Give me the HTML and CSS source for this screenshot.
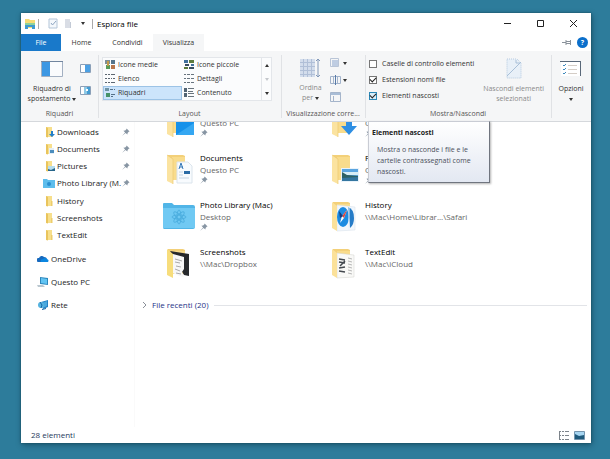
FILE: index.html
```
<!DOCTYPE html>
<html lang="it">
<head>
    <meta charset="UTF-8">
    <meta name="viewport" content="width=device-width, initial-scale=1.0">
    <title>Esplora file</title>
    <link rel="stylesheet" href="styles.css">
</head>
<body>
    <!-- Shared icons -->
    <svg class="defs" aria-hidden="true">
        <symbol id="pin" viewBox="0 0 8 8">
            <path d="M4.6 0.4L7.6 3.4L6.7 3.7L5.6 4.9L5.4 6.6L3.5 4.9L0.6 7.6L0.4 7.4L3.1 4.5L1.4 2.7L3.2 2.4L4.4 1.3Z" fill="#8795a3"/>
        </symbol>
        <symbol id="folder-small" viewBox="0 0 12 12">
            <path d="M3 1h6v10H3z" fill="#f7df8c"/>
            <path d="M3 1l2 1v9.500l-2-.5z" fill="#e9c45c"/>
            <path d="M8 6h1.500v5H8z" fill="#edcd6c"/>
        </symbol>
        <symbol id="folder-back" viewBox="0 0 34 33">
            <path d="M6 3h15l2 1v24H6z" fill="#f3d079"/>
            <path d="M10 5h13v23H10z" fill="#f9dc8c"/>
        </symbol>
        <symbol id="folder-front" viewBox="0 0 34 33">
            <path d="M5 3l6 4v25l-6-3z" fill="#fbe3a0"/>
            <path d="M5 3l6 4v25" fill="none" stroke="#ecc870" stroke-width=".7"/>
        </symbol>
    </svg>

    <div class="window">
        <header class="titlebar">
            <svg class="app-icon" width="12" height="10" viewBox="0 0 12 10">
                <path d="M1 0h4l1 1h5v8H1z" fill="#f5dc75"/>
                <path d="M1 4h10v2H1z" fill="#8fd39a"/>
                <path d="M1 6h10v4H8V8H4v2H1z" fill="#3f9bd0"/>
            </svg>
            <span class="bar"></span>
            <button class="quick" aria-label="Proprietà">
                <svg width="10" height="11" viewBox="0 0 10 11"><path d="M1 1h8v9H1z" fill="#f4f8fc" stroke="#b3c5d8"/><path d="M3 5l1.500 2L8 3" fill="none" stroke="#8fa6c2"/></svg>
            </button>
            <button class="quick" aria-label="Nuova cartella">
                <svg width="10" height="11" viewBox="0 0 10 11"><path d="M2 1h5v9H2z" fill="#d9dde5"/><path d="M7 4h1v6H7z" fill="#c3cad6"/></svg>
            </button>
            <button class="quick" aria-label="Personalizza"><span class="caret"></span></button>
            <span class="bar"></span>
            <h1>Esplora file</h1>
            <div class="controls">
                <button aria-label="Riduci"><svg width="9" height="9"><path d="M1 4.500h7" stroke="#222"/></svg></button>
                <button aria-label="Ingrandisci"><svg width="9" height="9"><path d="M1.500 1.500h6v6h-6z" fill="none" stroke="#222"/></svg></button>
                <button aria-label="Chiudi"><svg width="9" height="9"><path d="M1 1l7 7M8 1l-7 7" stroke="#222"/></svg></button>
            </div>
        </header>

        <nav class="tabs">
            <a class="file" href="#file">File</a>
            <a class="home" href="#home">Home</a>
            <a class="share" href="#condividi">Condividi</a>
            <a class="active" href="#visualizza">Visualizza</a>
            <div class="tab-tools">
                <button aria-label="Blocca barra"><svg width="10" height="7" viewBox="0 0 10 7"><path d="M0 3.500h4M4 1v5M4 2.500h4M4 4.500h4M8.500 1v5" fill="none" stroke="#8a929b"/></svg></button>
                <button class="help" aria-label="Guida">?</button>
            </div>
        </nav>

        <section class="ribbon">
            <div class="group panes">
                <div class="tools">
                    <button class="big">
                        <svg width="22" height="16" viewBox="0 0 22 16"><path d="M.5.5h21v15H.5z" fill="#fafbfd" stroke="#a3b0c2"/><path d="M1 1h8v14H1z" fill="#3c97e3"/><path d="M0 .5h22" stroke="#71859f"/></svg>
                        <span>Riquadro di<br>spostamento <i class="caret"></i></span>
                    </button>
                    <div class="small-tools">
                        <button aria-label="Riquadro di anteprima"><svg width="11" height="9" viewBox="0 0 11 9"><path d="M.5.5h10v8H.5z" fill="#fff" stroke="#8ba0b8"/><path d="M5 1h5v7H5z" fill="#4ca1e4"/></svg></button>
                        <button aria-label="Riquadro dettagli"><svg width="11" height="9" viewBox="0 0 11 9"><path d="M.5.5h10v8H.5z" fill="#fff" stroke="#8ba0b8"/><path d="M4 1h3v7H4z" fill="#8ec9e6"/><path d="M7 1h3v7H7z" fill="#459cd2"/><path d="M6 3h2v2H6z" fill="#fff"/></svg></button>
                    </div>
                </div>
                <h2>Riquadri</h2>
            </div>

            <div class="group layout">
                <div class="gallery">
                    <div class="options">
                        <button><svg width="11" height="10" viewBox="0 0 11 10"><path d="M0 0h5v4H0z" fill="#7d8f98"/><path d="M6 0h4v4H6z" fill="#54748c"/><path d="M1 5h4v4H1z" fill="#589b58"/><path d="M6 5h4v4H6z" fill="#b8764c"/><path d="M2 1h2v5H2z" fill="#c49b4a"/></svg>Icone medie</button>
                        <button><svg width="11" height="10" viewBox="0 0 11 10"><path d="M0 0h4v3H0zM7 4h3v2H7z" fill="#3f6f9c"/><path d="M5 0h5v3H5zM0 7h4v2H0z" fill="#5d7b3e"/><path d="M1 4h4v2H1zM5 7h5v2H5z" fill="#384c60"/></svg>Icone piccole</button>
                        <button><svg width="11" height="10" viewBox="0 0 11 10"><path d="M0 .5h2M3 .5h2M6 .5h4M0 4.500h2M3 4.500h2M6 4.500h1M8 4.500h2M0 8.500h2M3 8.500h2M6 8.500h4" stroke="#5d6771"/></svg>Elenco</button>
                        <button><svg width="11" height="10" viewBox="0 0 11 10"><path d="M0 .5h2M3 .5h3M7 .5h3M0 4.500h2M3 4.500h3M7 4.500h3M0 8.500h2M3 8.500h3M7 8.500h3" stroke="#68747e"/></svg>Dettagli</button>
                        <button class="selected"><svg width="11" height="10" viewBox="0 0 11 10"><path d="M0 0h4v3H0z" fill="#6f94a5"/><path d="M1 5h4v4H1z" fill="#479268"/><path d="M5 1.500h3M9 1.500h1M6 6.500h4M6 8.500h2" stroke="#547088"/></svg>Riquadri</button>
                        <button><svg width="11" height="10" viewBox="0 0 11 10"><path d="M0 0h3v4H0zM0 5h3v4H0z" fill="#526473"/><path d="M4 .5h6M4 3.500h5M4 5.500h6M4 8.500h6" stroke="#69747d"/></svg>Contenuto</button>
                    </div>
                    <div class="scroller">
                        <button aria-label="Su"><span class="caret up"></span></button>
                        <button aria-label="Giù"><span class="caret faint"></span></button>
                        <button aria-label="Altro"><span class="caret"></span></button>
                    </div>
                </div>
                <h2>Layout</h2>
            </div>

            <div class="group current">
                <div class="tools">
                    <button class="big" disabled>
                        <svg width="20" height="20" viewBox="0 0 20 20"><path d="M0 1h15v18H0z" fill="#d3ddec"/><path d="M0 4.500h15M0 8.500h15M0 12.500h15M0 16.500h15M3.500 1v18M7.500 1v18M11.500 1v18" stroke="#b0bfd7"/><path d="M18 1v18M16 3l2-2 2 2M16 17l2 2 2-2" fill="none" stroke="#8298b8"/></svg>
                        <span>Ordina<br>per <i class="caret"></i></span>
                    </button>
                    <div class="small-tools">
                        <button aria-label="Raggruppa per"><svg width="11" height="10" viewBox="0 0 11 10"><path d="M2 2h6v6H2z" fill="#bfcde2"/><path d="M.5.5h8v8h-8z" fill="none" stroke="#b9c5d7"/></svg><i class="caret"></i></button>
                        <button aria-label="Aggiungi colonne"><svg width="11" height="10" viewBox="0 0 11 10"><path d="M.5 1.500h10v7H.5zM3.500 2v7M7.500 2v7" fill="none" stroke="#a3b4cc"/><path d="M5.500 0v10" stroke="#587ba8"/></svg><i class="caret"></i></button>
                        <button aria-label="Ridimensiona colonne"><svg width="11" height="10" viewBox="0 0 11 10"><path d="M.5.5h10v9H.5zM3.500 4v6" fill="none" stroke="#a5b5cb"/><path d="M1 1h9v2H1z" fill="#a9bdd6"/></svg></button>
                    </div>
                </div>
                <h2>Visualizzazione corre...</h2>
            </div>

            <div class="group show">
                <div class="tools">
                    <div class="checks">
                        <label><input type="checkbox"> Caselle di controllo elementi</label>
                        <label><input type="checkbox" checked> Estensioni nomi file</label>
                        <label><input class="hot" type="checkbox" aria-describedby="tip" checked> Elementi nascosti</label>
                    </div>
                    <button class="big" disabled>
                        <svg width="16" height="21" viewBox="0 0 16 21"><path d="M1 1h10l4 4v15H1z" fill="#e8f0f8"/><path d="M1 1h10l4 4v15H1z" fill="none" stroke="#b6cae0" stroke-dasharray="1 1"/><path d="M1 18L15 4M10 2v3h4" fill="none" stroke="#a9c0d8"/></svg>
                        <span>Nascondi elementi<br>selezionati</span>
                    </button>
                </div>
                <h2>Mostra/Nascondi</h2>
                <div class="tooltip" id="tip" role="tooltip">
                    <strong>Elementi nascosti</strong>
                    <p>Mostra o nasconde i file e le cartelle contrassegnati come nascosti.</p>
                </div>
            </div>

            <div class="group settings">
                <button class="big">
                    <svg width="22" height="16" viewBox="0 0 22 16"><path d="M1 1h19v14H1z" fill="#fff"/><path d="M0 .5h21M20.500 1v14" stroke="#596879"/><path d="M3 4l1 1 2-2M3 8l1 1 2-2M3 12l1 1 2-2" fill="none" stroke="#3d89bd"/><path d="M8 4.500h9M8 8.500h9M8 12.500h9" stroke="#d4cdc6"/></svg>
                    <span>Opzioni<br><i class="caret"></i></span>
                </button>
            </div>
        </section>

        <main>
            <aside class="sidebar">
                <ul class="folders">
                    <li><a href="#downloads"><svg class="ico" viewBox="0 0 12 12"><use href="#folder-small"/><path d="M8 5h2v3h2L9 11 6 8h2z" fill="#237fc9"/></svg>Downloads</a><svg class="pin"><use href="#pin"/></svg></li>
                    <li><a href="#documents"><svg class="ico" viewBox="0 0 12 12"><use href="#folder-small"/><path d="M6 5h5v6H6z" fill="#e4eef6"/><path d="M7 7h4v3H7z" fill="#4b8dbd"/></svg>Documents</a><svg class="pin"><use href="#pin"/></svg></li>
                    <li><a href="#pictures"><svg class="ico" viewBox="0 0 12 12"><use href="#folder-small"/><path d="M5 6h7v5H5z" fill="#b5dced"/><path d="M5 9l3 1 4-2v3H5z" fill="#27658a"/></svg>Pictures</a><svg class="pin"><use href="#pin"/></svg></li>
                    <li><a href="#photos"><svg class="ico" viewBox="0 0 12 12"><path d="M0 2h4l1 1h7v8H0z" fill="#5dbdec"/><circle cx="6" cy="7" r="2" fill="#2a8fd0"/></svg>Photo Library (M.</a><svg class="pin"><use href="#pin"/></svg></li>
                    <li><a href="#history"><svg class="ico"><use href="#folder-small"/></svg>History</a></li>
                    <li><a href="#screenshots"><svg class="ico"><use href="#folder-small"/></svg>Screenshots</a></li>
                    <li><a href="#textedit"><svg class="ico"><use href="#folder-small"/></svg>TextEdit</a></li>
                </ul>
                <ul class="places">
                    <li><a href="#onedrive"><svg class="ico" viewBox="0 0 12 12"><path d="M1 9a2 2 0 0 1 1-4 3 3 0 0 1 5-1 3 3 0 0 1 3 3v2z" fill="#1769be"/><path d="M4 9a2 2 0 0 1 2-3 3 3 0 0 1 4 0 2 2 0 0 1 1 3z" fill="#0b86e0"/></svg>OneDrive</a></li>
                    <li><a href="#pc"><svg class="ico" viewBox="0 0 12 12"><path d="M3 1l8 1v7l-8-1z" fill="#2c87bd"/><path d="M4 2l6 1v5l-6-1z" fill="#61c4f3"/><path d="M0 9h6l2 2H1z" fill="#bac7cf"/></svg>Questo PC</a></li>
                    <li><a href="#rete"><svg class="ico" viewBox="0 0 12 12"><path d="M4 3l7-2v7l-5 2z" fill="#2281c4"/><path d="M5 4l5-2v5l-4 2z" fill="#4aa8de"/><circle cx="4" cy="6" r="3" fill="#55b3e0"/><path d="M3 3l2 3-1 3M5 10.500l4-1" fill="none" stroke="#1766a4"/></svg>Rete</a></li>
                </ul>
            </aside>

            <div class="content">
                <div class="tiles">
                    <a class="tile" href="#desktop">
                        <svg width="34" height="33"><use href="#folder-back"/><path d="M14 13h18v17H14z" fill="#1691ea"/><path d="M14 30l18-12v12z" fill="#35a7f2"/><use href="#folder-front"/></svg>
                        <span><b>Desktop</b><small>Questo PC</small><svg class="pin"><use href="#pin"/></svg></span>
                    </a>
                    <a class="tile" href="#downloads">
                        <svg width="34" height="33"><use href="#folder-back"/><use href="#folder-front"/><path d="M19 11h6v10h5l-8 9-8-9h5z" fill="#2f8fe3"/></svg>
                        <span><b>Downloads</b><small>Questo PC</small><svg class="pin"><use href="#pin"/></svg></span>
                    </a>
                    <a class="tile" href="#documents">
                        <svg width="34" height="33"><use href="#folder-back"/><path d="M15 10h11l4 4v17H15z" fill="#f8fbfe" stroke="#dbe4ec"/><path d="M17 17l2-6 2 6M18 15h3" fill="none" stroke="#3478b8"/><path d="M22 19h6v3h-6z" fill="#2b6ba5"/><path d="M17 20h4M17 23h4M17 26h10" stroke="#c6d5e3"/><use href="#folder-front"/></svg>
                        <span><b>Documents</b><small>Questo PC</small><svg class="pin"><use href="#pin"/></svg></span>
                    </a>
                    <a class="tile" href="#pictures">
                        <svg width="34" height="33"><use href="#folder-back"/><use href="#folder-front"/><path d="M14 16h18v14H14z" fill="#e9f3fb"/><path d="M15 17h16v12H15z" fill="#5aa5e0"/><path d="M15 20h16v3H15z" fill="#d7edf5"/><path d="M15 20l5 3 11 1v5H15z" fill="#2e6264"/><path d="M15 26l16-1v4H15z" fill="#3476a0"/></svg>
                        <span><b>Pictures</b><small>Questo PC</small><svg class="pin"><use href="#pin"/></svg></span>
                    </a>
                    <a class="tile" href="#photos">
                        <svg width="34" height="33"><path d="M1 5q0-1 1-1h8l2 2h19q2 0 2 2v20q0 2-2 2H2q-1 0-1-2z" fill="#51b5e7"/><path d="M1 9h32v20H1z" fill="#70c9f3"/><g fill="none" stroke="#4dafe0"><ellipse cx="17" cy="18" rx="2" ry="7"/><ellipse cx="17" cy="18" rx="7" ry="2"/><ellipse cx="17" cy="18" rx="2" ry="7" transform="rotate(45 17 18)"/><ellipse cx="17" cy="18" rx="2" ry="7" transform="rotate(-45 17 18)"/></g></svg>
                        <span><b>Photo Library (Mac)</b><small>Desktop</small><svg class="pin"><use href="#pin"/></svg></span>
                    </a>
                    <a class="tile" href="#history">
                        <svg width="34" height="33"><use href="#folder-back"/><path d="M10 6l18 2v23l-18 1z" fill="#f2f7fc" stroke="#d5dfe9" stroke-width=".5"/><ellipse cx="16" cy="18" rx="6" ry="10" fill="#1c8be1"/><path d="M21 8q6 2 6 11 0 7-4 10z" fill="#267cc7"/><path d="M13 24l2-7 5-6-3 8z" fill="#fff"/><path d="M15 17l5-6-3 8z" fill="#d9473f"/><path d="M12 12l4 5-3 2z" fill="#143c82"/><path d="M22 7v24" stroke="#e9f2fa"/><path d="M5 3l5 4v25l-5-3z" fill="#fbe19a"/></svg>
                        <span><b>History</b><small>\\Mac\Home\Librar...\Safari</small></span>
                    </a>
                    <a class="tile" href="#screenshots">
                        <svg width="34" height="33"><use href="#folder-back"/><path d="M8 5l19 3v22l-5-1z" fill="#27292c"/><path d="M11 8l11 3v12l-2 3 2 5-5-1-6-3z" fill="#f7f7f7"/><path d="M13 13l7 2M13 16l5 1M14 20l5 1M13 23l5 2M14 27l5 1" stroke="#888" stroke-width=".7"/><path d="M5 3l6 5v24l-6-3z" fill="#f7dd7c"/></svg>
                        <span><b>Screenshots</b><small>\\Mac\Dropbox</small></span>
                    </a>
                    <a class="tile" href="#textedit">
                        <svg width="34" height="33"><use href="#folder-back"/><path d="M10 7l17 2v22l-17 1z" fill="#f9f9f7" stroke="#d2d2cc" stroke-width=".5"/><path d="M12 13l6 1M12 16l6 1M13 20l5-5M12 22l6-1M12 25l6 1" stroke="#454a50" stroke-width="1.500"/><path d="M21 12l4 1M21 15l4 1M21 18l4 1M21 21l4 1M21 24l4 1M21 27l4 1" stroke="#999" stroke-width=".7"/><path d="M5 3l5 4v25l-5-3z" fill="#fbe19a"/></svg>
                        <span><b>TextEdit</b><small>\\Mac\iCloud</small></span>
                    </a>
                </div>
                <button class="section-title">
                    <svg width="5" height="8"><path d="M1 1l3 3-3 3" fill="none" stroke="#8a8f98"/></svg>
                    <span>File recenti (20)</span>
                </button>
            </div>
        </main>

        <footer class="status">
            <span>28 elementi</span>
            <button aria-label="Dettagli"><svg width="10" height="9" viewBox="0 0 10 9"><path d="M0 .5h2M3 .5h2M6 .5h4M0 4.500h2M3 4.500h2M6 4.500h4M0 8.500h2M3 8.500h2M6 8.500h4M.5 0v9" stroke="#7d848b"/></svg></button>
            <button aria-label="Icone grandi"><svg width="11" height="9" viewBox="0 0 11 9"><path d="M.5.5h10v8H.5z" fill="#a6d5f1" stroke="#7595ae"/><path d="M1 3l4 2 5-1v4H1z" fill="#1f5a7c"/></svg></button>
        </footer>
    </div>
</body>
</html>
```
FILE: styles.css
```
* {
    box-sizing: border-box;
}

body, h1, h2, p, ul {
    margin: 0;
    padding: 0;
}

body {
    display: flex;
    height: 100vh;
    padding: 13px 19px 16px 21px;
    background-color: #2d7c9b;
    font: 8px/12px "Open Sans", "Noto Sans", sans-serif;
    color: #1c1c1c;
}

ul {
    list-style: none;
}

a {
    color: inherit;
    text-decoration: none;
}

button {
    margin: 0;
    padding: 0;
    border: 0;
    background: none;
    font: inherit;
    color: inherit;
    cursor: pointer;
}

svg {
    display: block;
    flex: none;
}

.defs {
    display: none;
}

.window {
    flex: 1;
    display: flex;
    flex-direction: column;
    min-width: 0;
    background-color: #fff;
    box-shadow: 0 0 2px #164759, 1px 2px 6px rgba(0, 30, 45, 0.4);
}

/* Little triangles for drop-downs */
.caret {
    display: inline-block;
    border: 2px solid transparent;
    border-top: 3px solid #333;
    border-bottom: 0;
    vertical-align: middle;
}

.caret.up {
    border-top: 0;
    border-bottom: 3px solid #333;
}

.caret.faint {
    border-top-color: #c4c7cc;
}

/* Title bar */
.titlebar {
    display: flex;
    align-items: center;
    height: 21px;
    padding-left: 3px;
}

.bar {
    width: 1px;
    height: 10px;
    margin: 0 4px 0 2px;
    background-color: #aaa;
}

.quick {
    display: flex;
    justify-content: center;
    width: 15px;
}

.app-icon + .bar {
    margin-right: 6px;
}

.quick + .bar {
    margin-left: 2px;
}

h1 {
    font-size: 8px;
    font-weight: 400;
    color: #000;
}

.controls {
    display: flex;
    margin-left: auto;
    padding-right: 1px;
}

.controls button {
    display: flex;
    align-items: center;
    justify-content: center;
    width: 33px;
    height: 20px;
}

/* Tabs */
.tabs {
    display: flex;
    height: 17px;
    font-size: 7px;
    line-height: 18px;
    text-align: center;
    color: #333;
}

.tabs a {
    width: 51px;
}

.tabs .file {
    width: 40px;
    background-color: #1979ca;
    color: #fff;
}

.tabs .home {
    width: 41px;
}

.tabs .active {
    background-color: #f5f6f7;
}

.tab-tools {
    display: flex;
    align-items: center;
    gap: 5px;
    margin-left: auto;
    padding-right: 3px;
}

.help {
    width: 11px;
    height: 11px;
    border-radius: 50%;
    background-color: #0b6fcb;
    color: #fff;
    font-weight: 700;
    line-height: 11px;
}

/* Ribbon */
.ribbon {
    display: flex;
    height: 71px;
    border-bottom: 1px solid #d5d8dc;
    background-color: #f5f6f7;
    font-size: 7px;
    line-height: 10px;
    color: #333;
}

.group {
    position: relative;
    display: flex;
    flex-direction: column;
    min-width: 0;
    padding-top: 6px;
}

.group + .group::before {
    content: "";
    position: absolute;
    left: 0;
    top: 4px;
    bottom: 3px;
    width: 1px;
    background-color: #e0e2e5;
}

.panes { flex: 77 1 0; }
.layout { flex: 183 1 0; }
.current { flex: 84 1 0; }
.show { flex: 186 1 0; }
.settings { flex: 40 1 0; }

h2 {
    margin-top: auto;
    padding-bottom: 2px;
    font-size: 7px;
    font-weight: 400;
    text-align: center;
    white-space: nowrap;
    color: #555;
}

.tools {
    display: flex;
    justify-content: center;
    gap: 8px;
}

.big {
    display: flex;
    flex-direction: column;
    align-items: center;
    line-height: 10px;
    white-space: nowrap;
}

.big svg {
    margin: 4px 0 7px;
}

.big:disabled {
    color: #8a8a8a;
}

.current .big svg, .show .big svg {
    margin: 1px 0 5px;
}

.small-tools {
    display: flex;
    flex-direction: column;
    gap: 7px;
    padding-top: 1px;
}

.small-tools button {
    display: flex;
    align-items: center;
    gap: 2px;
}

.panes .tools {
    gap: 4px;
}

.panes .small-tools {
    gap: 13px;
    padding-top: 7px;
}

.gallery {
    display: flex;
    margin: 0 9px 0 4px;
    border: 1px solid #e3e6ea;
    background-color: #fbfcfd;
}

.options {
    flex: 1;
    display: grid;
    grid-template-columns: 1fr 1fr;
}

.options button {
    display: flex;
    align-items: center;
    gap: 2px;
    height: 14px;
    padding-left: 1px;
    border: 1px solid transparent;
}

.options .selected {
    border-color: #9cc3e6;
    background-color: #cce4fb;
}

.scroller {
    display: flex;
    flex-direction: column;
    width: 10px;
    border-left: 1px solid #e3e6ea;
}

.scroller button {
    flex: 1;
    display: flex;
    align-items: center;
    justify-content: center;
}

.show .tools {
    justify-content: space-between;
    padding: 0 7px 0 4px;
}

.checks {
    display: flex;
    flex-direction: column;
    gap: 6px;
    padding-top: 2px;
}

.checks label {
    display: flex;
    align-items: center;
    gap: 5px;
    white-space: nowrap;
}

.checks input {
    appearance: none;
    width: 8px;
    height: 8px;
    margin: 0;
    border: 1px solid #777;
    background: #fff;
}

.checks input:checked::before {
    content: "";
    display: block;
    width: 5px;
    height: 3px;
    border: solid #222;
    border-width: 0 0 1px 1px;
    transform: rotate(-45deg);
}

.checks .hot {
    border-color: #2a88b8;
    background-color: #d8edf9;
}

/* Tooltip hangs below the ribbon */
.tooltip {
    position: absolute;
    left: 3px;
    top: 100%;
    z-index: 1;
    width: 122px;
    padding: 5px 3px;
    border: 1px solid #c9ccd4;
    border-right-color: #70757f;
    border-bottom-color: #70757f;
    background: linear-gradient(#fff, #e3e8f2);
    box-shadow: 1px 1px 2px rgba(0, 0, 0, 0.3);
    line-height: 11px;
    color: #4a4f5a;
}

.tooltip strong {
    color: #222;
}

.tooltip p {
    padding: 6px 0 0 5px;
}

/* Main area */
main {
    flex: 1;
    display: flex;
    min-height: 0;
}

.sidebar {
    width: 114px;
    padding-top: 1px;
    border-right: 1px solid #fafafa;
}

.sidebar li, .sidebar a {
    display: flex;
    align-items: center;
    white-space: nowrap;
}

.sidebar a {
    flex: 1;
    gap: 2px;
    min-width: 0;
}

.ico {
    width: 12px;
    height: 12px;
}

.pin {
    width: 8px;
    height: 8px;
}

.folders {
    display: grid;
    grid-auto-rows: 1fr;
    height: 121px;
    padding: 0 4px 0 22px;
}

.places {
    padding: 3px 0 0 16px;
}

.places li {
    height: 23px;
}

.content {
    flex: 1;
    min-width: 0;
    overflow: hidden;
}

/* The list is scrolled, so its first row is cut by the ribbon */
.tiles {
    display: grid;
    grid-template-columns: 165px 165px;
    grid-auto-rows: 47px;
    margin-top: -17px;
    padding-left: 27px;
}

.tile {
    display: flex;
    gap: 4px;
}

.tile b, .tile small {
    display: block;
    font-size: 8px;
    font-weight: 500;
    white-space: nowrap;
}

.tile b {
    color: #000;
}

.tile small {
    font-weight: 400;
    color: #666;
}

.section-title {
    display: flex;
    align-items: center;
    gap: 5px;
    width: 100%;
    margin-top: 6px;
    padding: 0 4px 0 7px;
    color: #1e3287;
}

.section-title::after {
    content: "";
    flex: 1;
    height: 1px;
    background-color: #e2e4e8;
}

/* Status bar */
.status {
    display: flex;
    align-items: center;
    gap: 5px;
    height: 16px;
    padding: 0 6px 0 10px;
    color: #1e395b;
}

.status span {
    margin-right: auto;
}
```
